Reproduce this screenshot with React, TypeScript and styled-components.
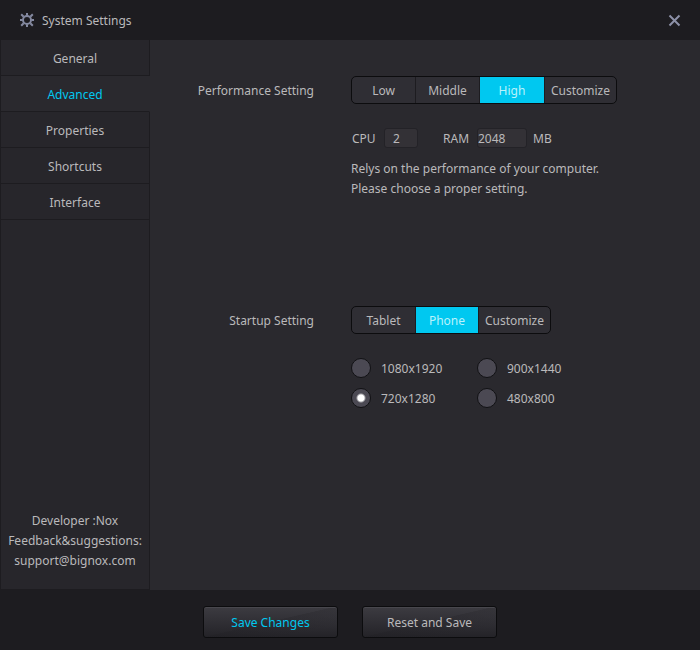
import React, { useState } from "react";
import styled, { createGlobalStyle } from "styled-components";

const GlobalStyle = createGlobalStyle`
  * { box-sizing: border-box; }
  body { margin: 0; background: #1d1c20; }
  body, button, input {
    font-family: "Noto Sans", "DejaVu Sans", sans-serif;
    font-size: 12px;
    line-height: 20px;
    color: #bab9bb;
  }
`;

const Window = styled.div`
  display: flex;
  flex-direction: column;
  min-height: 100vh;
  background: #1d1c20;
`;

const TitleBar = styled.header`
  display: flex;
  align-items: center;
  gap: 8px;
  height: 40px;
  padding: 0 19px 0 20px;
`;

const Title = styled.h1`
  flex: 1;
  margin: 0;
  padding-top: 2px;
  font-size: 12px;
  font-weight: normal;
`;

const CloseButton = styled.button`
  display: flex;
  padding: 0;
  border: 0;
  background: none;
  color: #8d91a8;
  cursor: pointer;
`;

const Body = styled.div`
  display: flex;
  flex: 1;
`;

const Sidebar = styled.aside`
  display: flex;
  flex-direction: column;
  justify-content: space-between;
  width: 150px;
  border-left: 1px solid #1d1c20;
  border-bottom: 1px solid #1d1c20;
  background: linear-gradient(to left, #1d1c20 1px, #27262b 1px);
`;

const Nav = styled.nav`
  display: flex;
  flex-direction: column;
`;

const NavItem = styled.button<{ $active: boolean }>`
  height: 36px;
  padding: 2px 0 0;
  border: 0;
  border-right: 1px solid ${(p) => (p.$active ? "#2a292e" : "#1d1c20")};
  border-bottom: 1px solid #1d1c20;
  background: ${(p) => (p.$active ? "#2a292e" : "#27262b")};
  color: ${(p) => (p.$active ? "#00c8f0" : "#bab9bb")};
  cursor: pointer;
`;

const Contact = styled.p`
  margin: 0;
  padding: 0 1px 18px 0;
  text-align: center;
`;

const Content = styled.main`
  display: flex;
  flex-direction: column;
  gap: 107px;
  flex: 1;
  padding: 36px 16px 36px 0;
  background: #2a292e;
`;

const Section = styled.section`
  display: grid;
  grid-template-columns: 164px 1fr;
  column-gap: 37px;
`;

const SectionTitle = styled.h2`
  margin: 0;
  font-size: 12px;
  font-weight: normal;
  line-height: 30px;
  text-align: right;
`;

const Controls = styled.div`
  display: flex;
  flex-direction: column;
  align-items: flex-start;
`;

const Segments = styled.div`
  display: flex;
  height: 28px;
  margin-bottom: 23px;
  border: 1px solid #0c0c0e;
  border-radius: 5px;
  background: #2f2e34;
  overflow: hidden;
`;

const Segment = styled.button<{ $active: boolean; $width: number }>`
  width: ${(p) => p.$width}px;
  padding: 2px 0 0;
  border: 0 solid #1d1c20;
  border-right-width: 1px;
  background: ${(p) => (p.$active ? "#00c8f0" : "transparent")};
  color: ${(p) => (p.$active ? "#b9f2fc" : "#bab9bb")};
  cursor: pointer;

  &:last-child {
    border-right-width: 0;
  }
`;

const Specs = styled.div`
  display: flex;
  align-items: center;
  gap: 25px;
  margin-bottom: 10px;
  padding-left: 1px;
`;

const Spec = styled.label`
  display: flex;
  align-items: center;
`;

const SpecName = styled.span<{ $width: number }>`
  width: ${(p) => p.$width}px;
  padding-top: 2px;
`;

const SpecUnit = styled.span`
  padding: 2px 0 0 6px;
`;

const SpecInput = styled.input<{ $width: number; $inset: number }>`
  width: ${(p) => p.$width}px;
  height: 20px;
  padding: 2px 0 0 ${(p) => p.$inset}px;
  border: 1px solid #232227;
  border-radius: 3px;
  background: #333136;
`;

const Note = styled.p`
  margin: 0;
`;

const Resolutions = styled.div`
  display: grid;
  grid-template-columns: 126px 126px;
  row-gap: 8px;
`;

const Resolution = styled.label`
  display: flex;
  align-items: center;
  gap: 10px;
  cursor: pointer;
`;

const ResolutionName = styled.span`
  padding-top: 2px;
`;

const Radio = styled.input`
  appearance: none;
  width: 20px;
  height: 20px;
  margin: 0;
  border: 1px solid #111114;
  border-radius: 50%;
  background: #4b4953;

  &:checked {
    background: radial-gradient(circle, #ffffff 3px, #4b4953 5px);
  }
`;

const Footer = styled.footer`
  display: flex;
  justify-content: center;
  gap: 24px;
  padding: 16px 0 12px;
`;

const ActionButton = styled.button<{ $primary?: boolean }>`
  width: 135px;
  height: 32px;
  padding: 2px 0 0;
  border: 1px solid #0c0c0e;
  border-radius: 3px;
  background:
    linear-gradient(167deg, transparent 49%, rgba(29, 28, 32, 0.2) 50%, transparent 80%),
    linear-gradient(#3c3b41, #242328);
  box-shadow: inset 0 1px #48474d;
  color: ${(p) => (p.$primary ? "#00c8f0" : "#bab9bb")};
  cursor: pointer;
`;

const GearIcon = () => (
  <svg width="14" height="14" viewBox="0 0 14 14" fill="none" stroke="#8489a0" aria-hidden="true">
    <circle cx="7" cy="7" r="4" strokeWidth="2" />
    <path
      d="M7 0v2.5M7 11.5V14M0 7h2.5M11.5 7H14M1.2 1.2l2.5 2.5M10.3 10.3l2.5 2.5M12.8 1.2l-2.5 2.5M3.7 10.3l-2.5 2.5"
      strokeWidth="2"
    />
  </svg>
);

const CloseIcon = () => (
  <svg width="13" height="13" viewBox="0 0 13 13" stroke="currentColor" aria-hidden="true">
    <path d="M1.5 1.5l10 10M11.5 1.5l-10 10" strokeWidth="2" />
  </svg>
);

type Option = { label: string; width: number };

const pages = ["General", "Advanced", "Properties", "Shortcuts", "Interface"];
const performanceOptions: Option[] = [
  { label: "Low", width: 64 },
  { label: "Middle", width: 64 },
  { label: "High", width: 65 },
  { label: "Customize", width: 71 },
];
const startupOptions: Option[] = [
  { label: "Tablet", width: 64 },
  { label: "Phone", width: 63 },
  { label: "Customize", width: 71 },
];
const resolutions = ["1080x1920", "900x1440", "720x1280", "480x800"];

function SegmentedControl({ label, options, initial }: { label: string; options: Option[]; initial: string }) {
  const [selected, setSelected] = useState(initial);
  return (
    <Segments role="group" aria-label={label}>
      {options.map((o) => (
        <Segment
          key={o.label}
          type="button"
          $width={o.width}
          $active={o.label === selected}
          aria-pressed={o.label === selected}
          onClick={() => setSelected(o.label)}
        >
          {o.label}
        </Segment>
      ))}
    </Segments>
  );
}

export default function App() {
  const [page, setPage] = useState("Advanced");
  const [resolution, setResolution] = useState("720x1280");

  return (
    <Window>
      <GlobalStyle />
      <TitleBar>
        <GearIcon />
        <Title>System Settings</Title>
        <CloseButton type="button" aria-label="Close">
          <CloseIcon />
        </CloseButton>
      </TitleBar>
      <Body>
        <Sidebar>
          <Nav>
            {pages.map((p) => (
              <NavItem key={p} type="button" $active={p === page} onClick={() => setPage(p)}>
                {p}
              </NavItem>
            ))}
          </Nav>
          <Contact>
            Developer :Nox
            <br />
            Feedback&amp;suggestions:
            <br />
            support@bignox.com
          </Contact>
        </Sidebar>
        <Content>
          <Section>
            <SectionTitle>Performance Setting</SectionTitle>
            <Controls>
              <SegmentedControl label="Performance Setting" options={performanceOptions} initial="High" />
              <Specs>
                <Spec>
                  <SpecName $width={32}>CPU</SpecName>
                  <SpecInput $width={34} $inset={8} defaultValue="2" />
                </Spec>
                <Spec>
                  <SpecName $width={34}>RAM</SpecName>
                  <SpecInput $width={50} $inset={0} defaultValue="2048" />
                  <SpecUnit>MB</SpecUnit>
                </Spec>
              </Specs>
              <Note>
                Relys on the performance of your computer.
                <br />
                Please choose a proper setting.
              </Note>
            </Controls>
          </Section>
          <Section>
            <SectionTitle>Startup Setting</SectionTitle>
            <Controls>
              <SegmentedControl label="Startup Setting" options={startupOptions} initial="Phone" />
              <Resolutions role="radiogroup" aria-label="Resolution">
                {resolutions.map((r) => (
                  <Resolution key={r}>
                    <Radio
                      type="radio"
                      name="resolution"
                      value={r}
                      checked={r === resolution}
                      onChange={() => setResolution(r)}
                    />
                    <ResolutionName>{r}</ResolutionName>
                  </Resolution>
                ))}
              </Resolutions>
            </Controls>
          </Section>
        </Content>
      </Body>
      <Footer>
        <ActionButton type="button" $primary>
          Save Changes
        </ActionButton>
        <ActionButton type="button">Reset and Save</ActionButton>
      </Footer>
    </Window>
  );
}
